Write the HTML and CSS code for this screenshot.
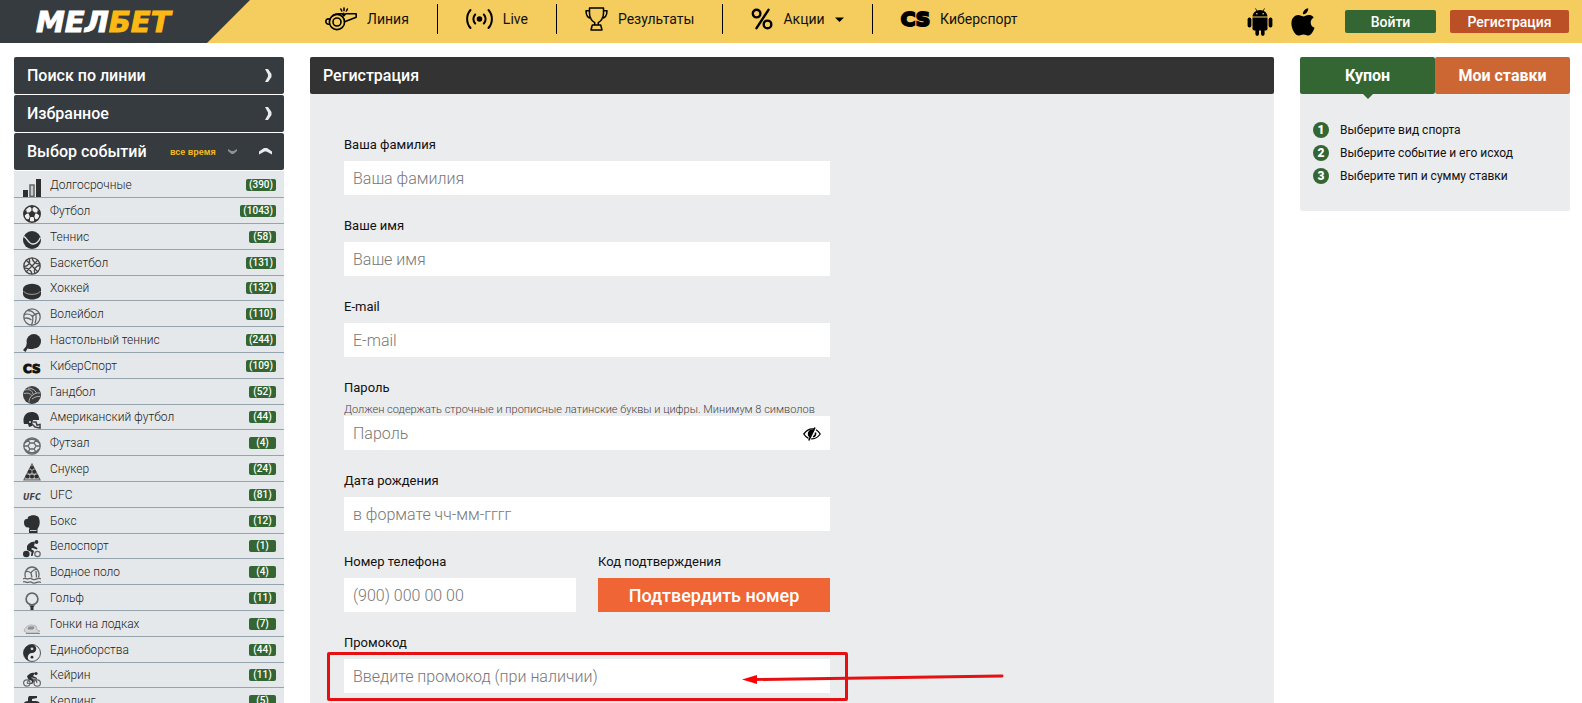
FILE: index.html
```html
<!DOCTYPE html>
<html lang="ru">
<head>
<meta charset="utf-8">
<meta name="viewport" content="width=device-width, initial-scale=1">
<title>Мелбет — Регистрация</title>
<link rel="stylesheet" href="styles.css">
</head>
<body>
<header class="topbar">
  <a class="logo" href="#"><span>МЕЛ</span><span class="logo-accent">БЕТ</span></a>
  <nav class="nav">
    <a class="nav-item" href="#">
      <svg width="32" height="24" viewBox="0 0 32 24" fill="none" stroke="#000" stroke-width="1.6" stroke-linejoin="round" stroke-linecap="round"><circle cx="12" cy="15" r="7.6"/><circle cx="12" cy="15" r="4"/><path d="M4.600 12.200C2 11.200.8 13 .8 14.600s1.500 3 3.600 2.600M8 8.500c2-1.400 4-1.700 6-1.700h3.200l1.600 2 2-2h10.400v3.400l-9.600 3.800-2.200.8M18.800 6.400V8.500M19 1v2.600M15.800 2l1 2M22.400 2l-1 2"/></svg>
      <span>Линия</span></a>
    <a class="nav-item" href="#">
      <svg width="27" height="22" viewBox="0 0 27 22" fill="none" stroke="#000" stroke-width="2" stroke-linecap="round"><circle cx="13.500" cy="11" r="1.800" fill="#000"/><path d="M9.200 6.500a6.500 6.500 0 0 0 0 9M17.800 6.500a6.500 6.500 0 0 1 0 9M4.500 2C0 7 0 15 4.500 20M22.500 2c4.500 5 4.500 13 0 18"/></svg>
      <span>Live</span></a>
    <a class="nav-item" href="#">
      <svg width="23" height="24" viewBox="0 0 23 24" fill="none" stroke="#000" stroke-width="1.500" stroke-linejoin="round"><path d="M4.500 1h14v5c0 5-2.200 8-5.200 9.600V18h2.400l1.300 5H6l1.300-5h2.400v-2.400C6.700 14 4.500 11 4.500 6zM4.500 3.800H1c0 5 2 7.400 5.500 7.400M18.500 3.800H22c0 5-2 7.400-5.500 7.400M7.300 18h8.400"/></svg>
      <span>Результаты</span></a>
    <a class="nav-item" href="#">
      <svg width="22" height="22" viewBox="0 0 22 22" fill="none" stroke="#000" stroke-width="2.400" stroke-linecap="round"><circle cx="5.600" cy="5.600" r="3.800"/><circle cx="16.500" cy="16.400" r="3.800"/><path d="M17.500 1.800 5.500 20.200"/></svg>
      <span>Акции</span>
      <svg class="caret" width="9" height="5" viewBox="0 0 9 5"><path d="M0 .5h9L4.500 5z"/></svg></a>
    <a class="nav-item" href="#">
      <span class="cs-mark">CS</span>
      <span>Киберспорт</span></a>
  </nav>
  <div class="account">
    <a href="#" aria-label="Android"><svg width="26" height="28" viewBox="0 0 26 28"><path d="M5.500 8.500C5.700 5.800 7.300 3.800 9.400 2.800L8.100.6l.6-.4L10.100 2.500a8.600 8.600 0 0 1 5.800 0L17.300.2l.6.4-1.300 2.200c2.100 1 3.700 3 3.900 5.700zM5.500 9.600h15v11.200a1.600 1.600 0 0 1-1.600 1.600h-1.300v3.700a1.800 1.800 0 0 1-3.600 0v-3.700h-2v3.700a1.800 1.800 0 0 1-3.600 0v-3.700H7.100a1.600 1.600 0 0 1-1.600-1.600z"/><rect x=".6" y="9.500" width="3.800" height="10" rx="1.900"/><rect x="21.600" y="9.500" width="3.800" height="10" rx="1.900"/><circle cx="9.800" cy="5.700" r=".8" fill="#f5cd5f"/><circle cx="16.200" cy="5.700" r=".8" fill="#f5cd5f"/></svg></a>
    <a href="#" aria-label="iOS"><svg width="24" height="28" viewBox="0 0 24 28"><path d="M17.200.2c.3 3.200-2.400 6.200-5.300 6C11.600 3.300 14.400.4 17.200.2zM22.700 9.400c-4.500 2.700-3.700 8.600.9 10.400-1.300 3.500-3.600 7.700-6.200 7.800-1.900 0-2.600-1.200-4.900-1.200-2.300 0-3.100 1.200-4.900 1.200C4.200 27.600.4 20.800.4 15.500.4 10 4 7.100 7.200 7.100c2.100 0 3.600 1.300 5.100 1.300 1.400 0 3.100-1.500 5.700-1.400 1.400 0 3.500.6 4.700 2.400z"/></svg></a>
    <button class="btn btn-login" type="button">Войти</button>
    <button class="btn btn-register" type="button">Регистрация</button>
  </div>
</header>

<main class="page">
  <aside class="sidebar">
    <button class="side-head" type="button"><span>Поиск по линии</span><svg width="7" height="13" viewBox="0 0 7 13"><path d="M0 0h3L6.500 5v3L3 13H0L3 7.500v-2z" fill="#e8eaeb"/></svg></button>
    <button class="side-head" type="button"><span>Избранное</span><svg width="7" height="13" viewBox="0 0 7 13"><path d="M0 0h3L6.500 5v3L3 13H0L3 7.500v-2z" fill="#e8eaeb"/></svg></button>
    <div class="side-head">
      <span>Выбор событий</span>
      <span class="head-tools">
        <select class="period" aria-label="Период"><option>все время</option></select>
        <svg width="9" height="5" viewBox="0 0 9 5"><path d="M0 0 3.500 2h2L9 0v2L5.500 5h-2L0 2z" fill="#8d9294"/></svg>
        <button class="collapse" type="button" aria-label="Свернуть"><svg width="13" height="7" viewBox="0 0 13 7"><path d="M0 6.500V3.500L5 0h3l5 3.500v3L7.500 3.500h-2z" fill="#e8eaeb"/></svg></button>
      </span>
    </div>
    <ul class="sports">
      <li><a href="#"><svg class="ico" viewBox="0 0 18 18"><path d="M0 11h5v7H0zM13 0h5v18h-5z"/><path d="M7 6h4v11.300H7z" fill="#ccc" stroke="#666" stroke-width="1.600"/></svg><span>Долгосрочные</span><b>(390)</b></a></li>
      <li><a href="#"><svg class="ico" viewBox="0 0 18 18"><circle cx="9" cy="9" r="8.200" fill="#eee" stroke="#333" stroke-width="1.500"/><path d="M9 5.500 12.500 8 11.200 12H6.800L5.500 8zM6 1.300h6L9 3.600zM.8 7l2.500-2 .7 3.500-3 2.500zM17.200 7l-2.500-2-.7 3.500 3 2.500zM3 14.500l3.500-.5.800 3zM15 14.500l-3.500-.5-.8 3z"/><path d="M9 2v4M3 8h3M15 8h-3M7 12l-1 3M11 12l1 3" stroke="#333"/></svg><span>Футбол</span><b>(1043)</b></a></li>
      <li><a href="#"><svg class="ico" viewBox="0 0 18 18"><circle cx="9" cy="9" r="9"/><path d="M.5 5.500C4 6 5 13 10 13c4 0 6-3 7.500-6.500" fill="none" stroke="#e5e8eb" stroke-width="1.400"/></svg><span>Теннис</span><b>(58)</b></a></li>
      <li><a href="#"><svg class="ico line" viewBox="0 0 18 18"><circle cx="9" cy="9" r="8.200"/><path d="M3 3l12 12M15 3 3 15M6 1.500c2 4.500-1 8-5 8M12 16.500c-2-4.500 1-8 5-8M9 1c1 4 4 6 8 6M1 11c4 0 7 2 8 6"/></svg><span>Баскетбол</span><b>(131)</b></a></li>
      <li><a href="#"><svg class="ico" viewBox="0 0 18 18"><path d="M0 7v5c0 3 4 5.500 9 5.500s9-2.500 9-5.500V7z"/><ellipse cx="9" cy="7" rx="9" ry="5.300"/><path d="M.5 9c2 4.500 15 4.500 17 0" fill="none" stroke="#aaa" stroke-width=".9"/></svg><span>Хоккей</span><b>(132)</b></a></li>
      <li><a href="#"><svg class="ico line soft" viewBox="0 0 18 18"><circle cx="9" cy="9" r="8.200"/><path d="M9.500 8.500C8 6.500 4.500 5.500 1.500 6.500M9.500 8.500c1 3 0 6-1 8.500M9.500 8.500c1.500-2 4-3.500 7-3M4.500 2.500c3 0 5.500 1 7 3.500M1 10.500c2.500-1 5-.5 7.500 1.500M13 6.500c.5 3 0 6-1 9"/></svg><span>Волейбол</span><b>(110)</b></a></li>
      <li><a href="#"><svg class="ico" viewBox="0 0 18 18"><circle cx="10.800" cy="7.300" r="7.200"/><path d="M4 8l7 7H7l-2.500-.5L2.500 18 0 16l3-3.500z"/></svg><span>Настольный теннис</span><b>(244)</b></a></li>
      <li><a href="#"><span class="ico cs-small">CS</span><span>КиберСпорт</span><b>(109)</b></a></li>
      <li><a href="#"><svg class="ico" viewBox="0 0 18 18"><circle cx="9" cy="9" r="9" fill="#3c3c3c"/><path d="M2 4c4-1 7 0 8 4M5 2c4 0 7 2 8.500 5M1 7.500c4-1 6 0 8 2-2 2-3 4-3 7M9 9.500c3-2 5-3 8-2.500M9 13c3-2 5-3 8-2.500" fill="none" stroke="#bbb" stroke-width=".9"/></svg><span>Гандбол</span><b>(52)</b></a></li>
      <li><a href="#"><svg class="ico" viewBox="0 0 18 18"><path d="M1 13C-1 6 3 1 8.500 1c5 0 8 3 7.500 8H10l-1 6-3 1-1-3z"/><path d="M10 11h3l1 3 3-.5V17l-5-1-3-3" fill="none" stroke="#444" stroke-width="1.600"/><circle cx="7" cy="11" r="1" fill="#ddd"/></svg><span>Американский футбол</span><b>(44)</b></a></li>
      <li><a href="#"><svg class="ico line soft" viewBox="0 0 18 18"><circle cx="9" cy="9" r="8.200"/><path d="M7 6h4l2 3-2 3H7L5 9zM7 6 5 3M11 6l2-3M13 9h4M5 9H1M7 12l-2 3M11 12l2 3M5 3 2 6M13 3l3 3M5 15l-3-3M13 15l3-3M5 3l4-1 4 1M5 15l4 1 4-1"/></svg><span>Футзал</span><b>(4)</b></a></li>
      <li><a href="#"><svg class="ico" viewBox="0 0 18 18"><path d="M9 1 1 17h16z" fill="#bbb" stroke="#666" stroke-width="1.200"/><circle cx="9" cy="4.800" r="1.900"/><circle cx="6.800" cy="8.800" r="2"/><circle cx="11.200" cy="8.800" r="2"/><circle cx="4.500" cy="13.500" r="2.100"/><circle cx="9" cy="13.500" r="2.100"/><circle cx="13.500" cy="13.500" r="2.100"/></svg><span>Снукер</span><b>(24)</b></a></li>
      <li><a href="#"><span class="ico ufc">UFC</span><span>UFC</span><b>(81)</b></a></li>
      <li><a href="#"><svg class="ico" viewBox="0 0 18 18"><path d="M5 2C8-.5 13-.5 15.500 2c1.500 3 2 8-1 12H6.500L6 12.500C3 13 1 11 1 8c0-3 1-4.500 3.500-4zM6 14h8.500v4H6z"/><path d="M7 15.500h6.500" stroke="#ccc"/></svg><span>Бокс</span><b>(12)</b></a></li>
      <li><a href="#"><svg class="ico" viewBox="0 0 18 18"><circle cx="3.300" cy="14" r="3.300"/><circle cx="14.500" cy="14" r="2.700" fill="none" stroke="#666" stroke-width="1.200"/><circle cx="13.500" cy="2" r="1.900"/><path d="M4 6c2-3 5-5 8-4l-1 4 3.500 2-.5 1.500L9.500 8 8 9l3 2-1.500 5H8l.5-4L4 10z"/></svg><span>Велоспорт</span><b>(1)</b></a></li>
      <li><a href="#"><svg class="ico line soft" viewBox="0 0 18 18"><path d="M2.500 11.500C.5 5 5 1 9 1s8.500 4 6.500 10.500M8 7C6 5.500 4 5 2.500 6M8 7c1-2 4-4 6-3.500M8 7l1 4.500M13 5l.5 6.500M0 13c2-1.500 3 0 4.500 0s3-1.500 4.500 0 3 0 4.500 0 2.500-1.500 4.500 0M0 16c2-1 3 .5 4.500.5S7.500 15 9 16.500s3 0 4.500 0 2.500-1.500 4.500 0"/></svg><span>Водное поло</span><b>(4)</b></a></li>
      <li><a href="#"><svg class="ico" viewBox="0 0 18 18"><circle cx="9" cy="7" r="5.900" fill="none" stroke="#666" stroke-width="1.700"/><path d="M6 13.500h6L10.500 15v3h-3v-3z"/></svg><span>Гольф</span><b>(11)</b></a></li>
      <li><a href="#"><svg class="ico" viewBox="0 0 18 18"><path d="M1 13c1-4 4-6 8-6l4 1 1 4 3 1-3 2H4z" fill="#d4d6d8" stroke="#aaa" stroke-width=".8"/><path d="M6 9h5l-1 2H5zM3 15.500h14" stroke="#888" fill="#999"/></svg><span>Гонки на лодках</span><b>(7)</b></a></li>
      <li><a href="#"><svg class="ico" viewBox="0 0 18 18"><circle cx="9" cy="9" r="8.500" fill="#e8eaec" stroke="#555"/><path d="M9 .5a4.250 4.250 0 0 1 0 8.500 4.250 4.250 0 0 0 0 8.500A8.500 8.500 0 0 1 9 .5z"/><circle cx="9" cy="4.800" r="1.400" fill="#ddd"/><circle cx="9" cy="13.200" r="1.400"/></svg><span>Единоборства</span><b>(44)</b></a></li>
      <li><a href="#"><svg class="ico" viewBox="0 0 18 18"><g fill="none" stroke="#666" stroke-width="1.200"><circle cx="3.800" cy="14" r="3.200"/><circle cx="14.200" cy="14" r="3.200"/><path d="M4 14 7 9.500l6 1 1 3.500M9 14.500l3-4M8 14.500H4"/></g><circle cx="13" cy="4.500" r="1.600"/><path d="M4 7c3-3 5-4 8-3l-2 3 4 2v1L9 8.500 8 9l3 2-2 4H8l1-3-4-2z"/></svg><span>Кейрин</span><b>(11)</b></a></li>
      <li><a href="#"><svg class="ico" viewBox="0 0 18 18"><path d="M6 1h8v2l-5 1v2h4c3 0 5 3 5 5H0c0-3 2-5 5-5V3zM0 12h18c0 3-2 5-4 5H4c-2 0-4-2-4-5z"/></svg><span>Керлинг</span><b>(5)</b></a></li>
    </ul>
  </aside>

  <section class="content">
    <h1 class="content-title">Регистрация</h1>
    <form class="form">
      <div class="field"><label for="surname">Ваша фамилия</label><input id="surname" type="text" placeholder="Ваша фамилия"></div>
      <div class="field"><label for="name">Ваше имя</label><input id="name" type="text" placeholder="Ваше имя"></div>
      <div class="field"><label for="email">E-mail</label><input id="email" type="email" placeholder="E-mail"></div>
      <div class="field">
        <label for="password">Пароль</label>
        <small class="hint">Должен содержать строчные и прописные латинские буквы и цифры. Минимум 8 символов</small>
        <div class="password">
          <input id="password" type="password" placeholder="Пароль">
          <button class="eye" type="button" aria-label="Показать пароль"><svg width="18" height="14" viewBox="0 0 18 14" fill="none" stroke="#000" stroke-width="1.300"><path d="M11 2C6 1 3 4 .8 7 2 9 3.500 10.500 5.500 11.400M13 2.800C15 4 16.300 5.500 17.200 7c-2 3-5 5.200-9 4.800"/><path d="M10.500 3.200C7 2.500 5 5 5.500 8l1 1.500z" fill="#000"/><path d="M12 .5 5.800 13.500M12.500 5.500c.3 2-.8 3.800-2.500 4.300" stroke-width="1.600"/></svg></button>
        </div>
      </div>
      <div class="field"><label for="birth">Дата рождения</label><input id="birth" type="text" placeholder="в формате чч-мм-гггг"></div>
      <div class="pair">
        <div class="field"><label for="phone">Номер телефона</label><input id="phone" type="tel" placeholder="(900) 000 00 00"></div>
        <div class="field"><label for="confirm">Код подтверждения</label><button id="confirm" class="confirm" type="button">Подтвердить номер</button></div>
      </div>
      <div class="field promo">
        <label for="promo">Промокод</label><input id="promo" type="text" placeholder="Введите промокод (при наличии)">
        <div class="frame"></div>
        <svg class="arrow" width="262" height="14" viewBox="0 0 262 14"><path d="M260 4 12 7.500" stroke="#e60f12" stroke-width="3" stroke-linecap="round"/><path d="M0 7.500 15 3v9z" fill="#f00"/></svg>
      </div>
    </form>
  </section>

  <aside class="coupon">
    <div class="tabs">
      <button class="tab tab-active" type="button">Купон</button>
      <button class="tab" type="button">Мои ставки</button>
    </div>
    <ol class="steps">
      <li><i>1</i><span>Выберите вид спорта</span></li>
      <li><i>2</i><span>Выберите событие и его исход</span></li>
      <li><i>3</i><span>Выберите тип и сумму ставки</span></li>
    </ol>
  </aside>
</main>
</body>
</html>
```
FILE: styles.css
```css
* { box-sizing: border-box; }

body {
  margin: 0;
  height: 100vh;
  overflow: hidden;
  display: flex;
  flex-direction: column;
  background: #fff;
  color: #111;
  font-family: Roboto, "Noto Sans", sans-serif;
  font-size: 13px;
}

a { color: inherit; text-decoration: none; }
button, input, select { font: inherit; border: 0; padding: 0; border-radius: 0; }
button { cursor: pointer; }
svg { display: block; flex: none; }

/* Top bar */
.topbar {
  flex: none;
  display: flex;
  align-items: stretch;
  height: 43px;
  padding-right: 13px;
  background: #f5cd5f;
}
.logo {
  flex: none;
  display: flex;
  align-items: center;
  width: 250px;
  padding-left: 36px;
  background: #363b3f;
  clip-path: polygon(0 0, 100% 0, 207px 100%, 0 100%);
  color: #fff;
  font: italic bold 29px "DejaVu Sans", sans-serif;
  -webkit-text-stroke: 1px currentColor;
}
.logo-accent { color: #fdb913; }
.nav {
  display: flex;
  align-items: flex-start;
  padding: 4px 0 0 46px;
}
.nav-item {
  display: flex;
  align-items: center;
  gap: 10px;
  height: 30px;
  padding: 0 28px;
  border-left: 1px solid #000;
  font-size: 14px;
  white-space: nowrap;
}
.nav-item:first-child { border-left-color: transparent; }
.cs-mark {
  font: bold 20px "DejaVu Sans", sans-serif;
  -webkit-text-stroke: 2px currentColor;
  color: #000;
}
.account {
  display: flex;
  align-items: center;
  gap: 14px;
  margin-left: auto;
}
.account a { margin-right: 4px; }
.btn {
  height: 23px;
  border-radius: 2px;
  color: #fff;
  font-size: 14px;
  font-weight: 500;
}
.btn-login { width: 91px; margin-left: 12px; background: #336633; }
.btn-register { width: 119px; background: #bb4f26; }

/* Three columns */
.page {
  flex: 1;
  min-height: 0;
  display: grid;
  grid-template-columns: 270px minmax(0, 1fr) 270px;
  grid-template-rows: minmax(0, 1fr);
  gap: 26px;
  padding: 14px 12px 0 14px;
}

/* Sidebar */
.sidebar {
  display: flex;
  flex-direction: column;
  gap: 1px;
  overflow: hidden;
}
.side-head {
  flex: none;
  display: flex;
  align-items: center;
  justify-content: space-between;
  width: 100%;
  height: 37px;
  padding: 0 12px 0 13px;
  border-radius: 2px;
  background: #363b3f;
  color: #fff;
  font-size: 16px;
  font-weight: 500;
}
.head-tools { display: flex; align-items: center; gap: 12px; }
.period {
  appearance: none;
  background: none;
  color: #f5b921;
  font: bold 9px "Liberation Sans", sans-serif;
}
.collapse { background: none; margin-left: 10px; }
.sports {
  margin: 0;
  padding: 1px 0 0;
  list-style: none;
  background: #e5e8eb;
}
.sports a {
  display: flex;
  align-items: center;
  gap: 9px;
  height: 26px;
  padding: 0 8px 0 9px;
  border-bottom: 1px solid #95a3ad;
  color: #222;
  font-size: 12px;
  font-weight: 300;
}
.sports li:nth-child(5n) a { height: 25px; }
.ico {
  flex: none;
  align-self: flex-end;
  width: 18px;
  height: 18px;
  fill: #2d2f31;
}
.line { fill: none; stroke: #444; stroke-width: 1.3; }
.soft { stroke: #666; }
.cs-small, .ufc { font-family: "DejaVu Sans", sans-serif; font-weight: 700; line-height: 18px; }
.cs-small { color: #111; font-size: 12px; -webkit-text-stroke: 1px currentColor; }
.ufc { color: #444; font-size: 8px; font-style: italic; }
.sports b {
  min-width: 27px;
  margin-left: auto;
  padding: 0 3px;
  border-radius: 2px;
  background: #336633;
  color: #fff;
  font-size: 10px;
  font-weight: 500;
  line-height: 12px;
  text-align: center;
}

/* Registration */
.content { background: #ebecee; }
.content-title {
  margin: 0;
  padding: 0 13px;
  border-radius: 2px;
  background: #333;
  color: #fff;
  font-size: 16px;
  font-weight: 500;
  line-height: 37px;
}
.form {
  display: flex;
  flex-direction: column;
  gap: 23px;
  max-width: 554px;
  padding: 43px 34px 0;
}
.field { display: flex; flex-direction: column; }
.field label {
  margin-bottom: 8px;
  font-size: 13px;
  line-height: 16px;
}
.field input {
  width: 100%;
  height: 34px;
  padding: 0 9px;
  background: #fff;
  font-size: 16px;
}
.field input::placeholder { color: #777; opacity: 1; font-weight: 300; }
.hint { color: #444; font-size: 11px; font-weight: 300; line-height: 12px; white-space: nowrap; }
.password { position: relative; }
.eye {
  position: absolute;
  top: 11px;
  right: 9px;
  background: none;
}
.pair { display: grid; grid-template-columns: 1fr 1fr; gap: 22px; }
.confirm {
  height: 34px;
  background: #f06535;
  color: #fff;
  font-size: 18px;
  font-weight: 500;
}

/* Highlight drawn over the promo field */
.promo { position: relative; }
.frame {
  position: absolute;
  inset: 17px -18px -8px -17px;
  border: 3px solid #e60f12;
  border-radius: 2px;
  pointer-events: none;
}
.arrow { position: absolute; left: 398px; bottom: 7px; }

/* Coupon */
.coupon { font-size: 12px; }
.tabs { display: grid; grid-template-columns: 1fr 1fr; }
.tab {
  height: 37px;
  border-radius: 2px;
  background: #cc6633;
  color: #fff;
  font-size: 16px;
  font-weight: 700;
}
.tab-active { position: relative; background: #336633; }
.tab-active::after {
  content: "";
  position: absolute;
  top: 100%;
  left: 50%;
  margin-left: -5px;
  border: 5px solid transparent;
  border-top-color: #336633;
  border-bottom: 0;
}
.steps {
  display: flex;
  flex-direction: column;
  gap: 7px;
  margin: 0;
  padding: 28px 13px 27px;
  list-style: none;
  border-radius: 0 0 2px 2px;
  background: #ebecee;
}
.steps li { display: flex; align-items: center; gap: 11px; line-height: 16px; }
.steps i {
  width: 16px;
  height: 16px;
  border-radius: 50%;
  background: #336633;
  color: #fff;
  font-style: normal;
  font-weight: 900;
  text-align: center;
}
```
